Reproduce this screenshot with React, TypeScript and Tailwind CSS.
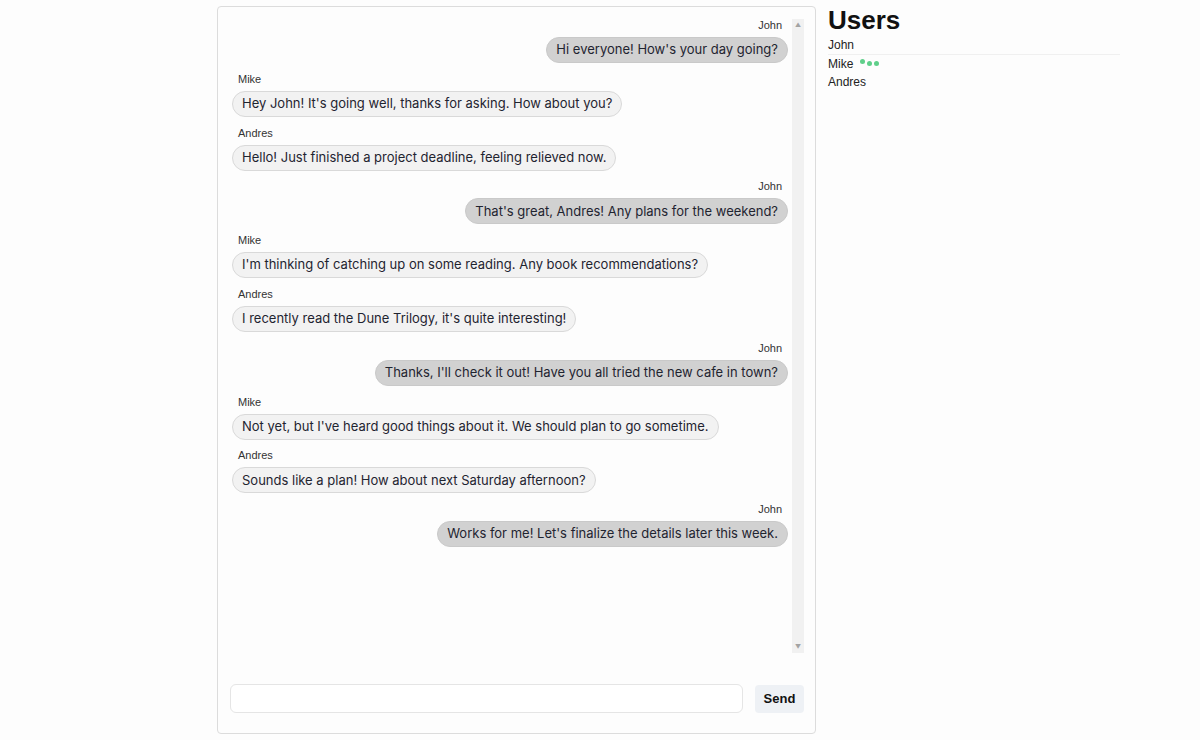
import { useState } from "react";

type Msg = { user: string; text: string };

const messages: Msg[] = [
  { user: "John", text: "Hi everyone! How's your day going?" },
  { user: "Mike", text: "Hey John! It's going well, thanks for asking. How about you?" },
  { user: "Andres", text: "Hello! Just finished a project deadline, feeling relieved now." },
  { user: "John", text: "That's great, Andres! Any plans for the weekend?" },
  { user: "Mike", text: "I'm thinking of catching up on some reading. Any book recommendations?" },
  { user: "Andres", text: "I recently read the Dune Trilogy, it's quite interesting!" },
  { user: "John", text: "Thanks, I'll check it out! Have you all tried the new cafe in town?" },
  { user: "Mike", text: "Not yet, but I've heard good things about it. We should plan to go sometime." },
  { user: "Andres", text: "Sounds like a plan! How about next Saturday afternoon?" },
  { user: "John", text: "Works for me! Let's finalize the details later this week." },
];

const me = "John";

function Bubble({ msg }: { msg: Msg }) {
  const mine = msg.user === me;
  return (
    <div className={mine ? "flex flex-col items-end" : "flex flex-col items-start"}>
      <span className="text-[11px] leading-[14px] text-[#333] px-1.5 mb-[5px]" style={{ fontFamily: "'Liberation Sans', Arial, sans-serif" }}>
        {msg.user}
      </span>
      <div
        className={
          mine
            ? "rounded-full border border-[#c9c9c9] bg-[#d1d1d1] px-[9px] h-[26px] flex items-center text-[13px] text-[#1f2430]"
            : "rounded-full border border-[#d9d9d9] bg-[#f2f2f2] px-[9px] h-[26px] flex items-center text-[13px] text-[#1f2430]"
        }
      >
        {msg.text}
      </div>
    </div>
  );
}

export default function App() {
  const [draft, setDraft] = useState("");

  return (
    <div className="min-h-screen bg-[#fdfdfd] flex items-start" style={{ fontFamily: "Inter, 'Liberation Sans', sans-serif" }}>
      <div className="ml-[217px] mt-[6px] w-[599px] h-[728px] rounded border border-[#dcdcdc] bg-[#fdfdfd] flex flex-col pl-[12px] pr-[11px] pt-[12px] pb-[20px]">
        <div className="flex h-[634px] gap-1">
          <div className="flex-1 flex flex-col gap-[8.8px] pl-[2px] -mt-[1px]">
            {messages.map((m, i) => (
              <Bubble key={i} msg={m} />
            ))}
          </div>
          <div className="w-[12px] bg-[#f1f1f1] flex flex-col justify-between items-center py-[2px] text-[#a3a3a3]">
            <span className="text-[6px] leading-[8px]">▲</span>
            <span className="text-[6px] leading-[8px]">▼</span>
          </div>
        </div>
        <div className="flex-1" />
        <div className="flex items-center gap-3">
          <input
            value={draft}
            onChange={(e) => setDraft(e.target.value)}
            className="flex-1 h-[29px] rounded-md border border-[#e5e5e5] bg-white px-2 text-sm outline-none"
          />
          <button
            className="h-[28px] w-[49px] rounded bg-[#eef1f5] text-[13px] font-bold text-[#111]"
            style={{ fontFamily: "'Liberation Sans', Arial, sans-serif" }}
          >
            Send
          </button>
        </div>
      </div>

      <div className="ml-[12px] mt-[5px] w-[292px]" style={{ fontFamily: "'Liberation Sans', Arial, sans-serif" }}>
        <h1 className="text-[26px] leading-[31px] font-bold text-[#111] mb-[1px]">Users</h1>
        <ul className="text-[12px] text-[#222]">
          <li className="leading-[17px] border-b border-[#f0f0f0]">John</li>
          <li className="leading-[18px] flex items-center gap-[7px]">
            Mike
            <span className="flex items-center gap-[2px]">
              <span className="w-[5px] h-[5px] rounded-full bg-[#5fcf8a] -mt-[5px]" />
              <span className="w-[5px] h-[5px] rounded-full bg-[#5fcf8a] -mt-[1px]" />
              <span className="w-[5px] h-[5px] rounded-full bg-[#5fcf8a] -mt-[1px]" />
            </span>
          </li>
          <li className="leading-[18px]">Andres</li>
        </ul>
      </div>
    </div>
  );
}
